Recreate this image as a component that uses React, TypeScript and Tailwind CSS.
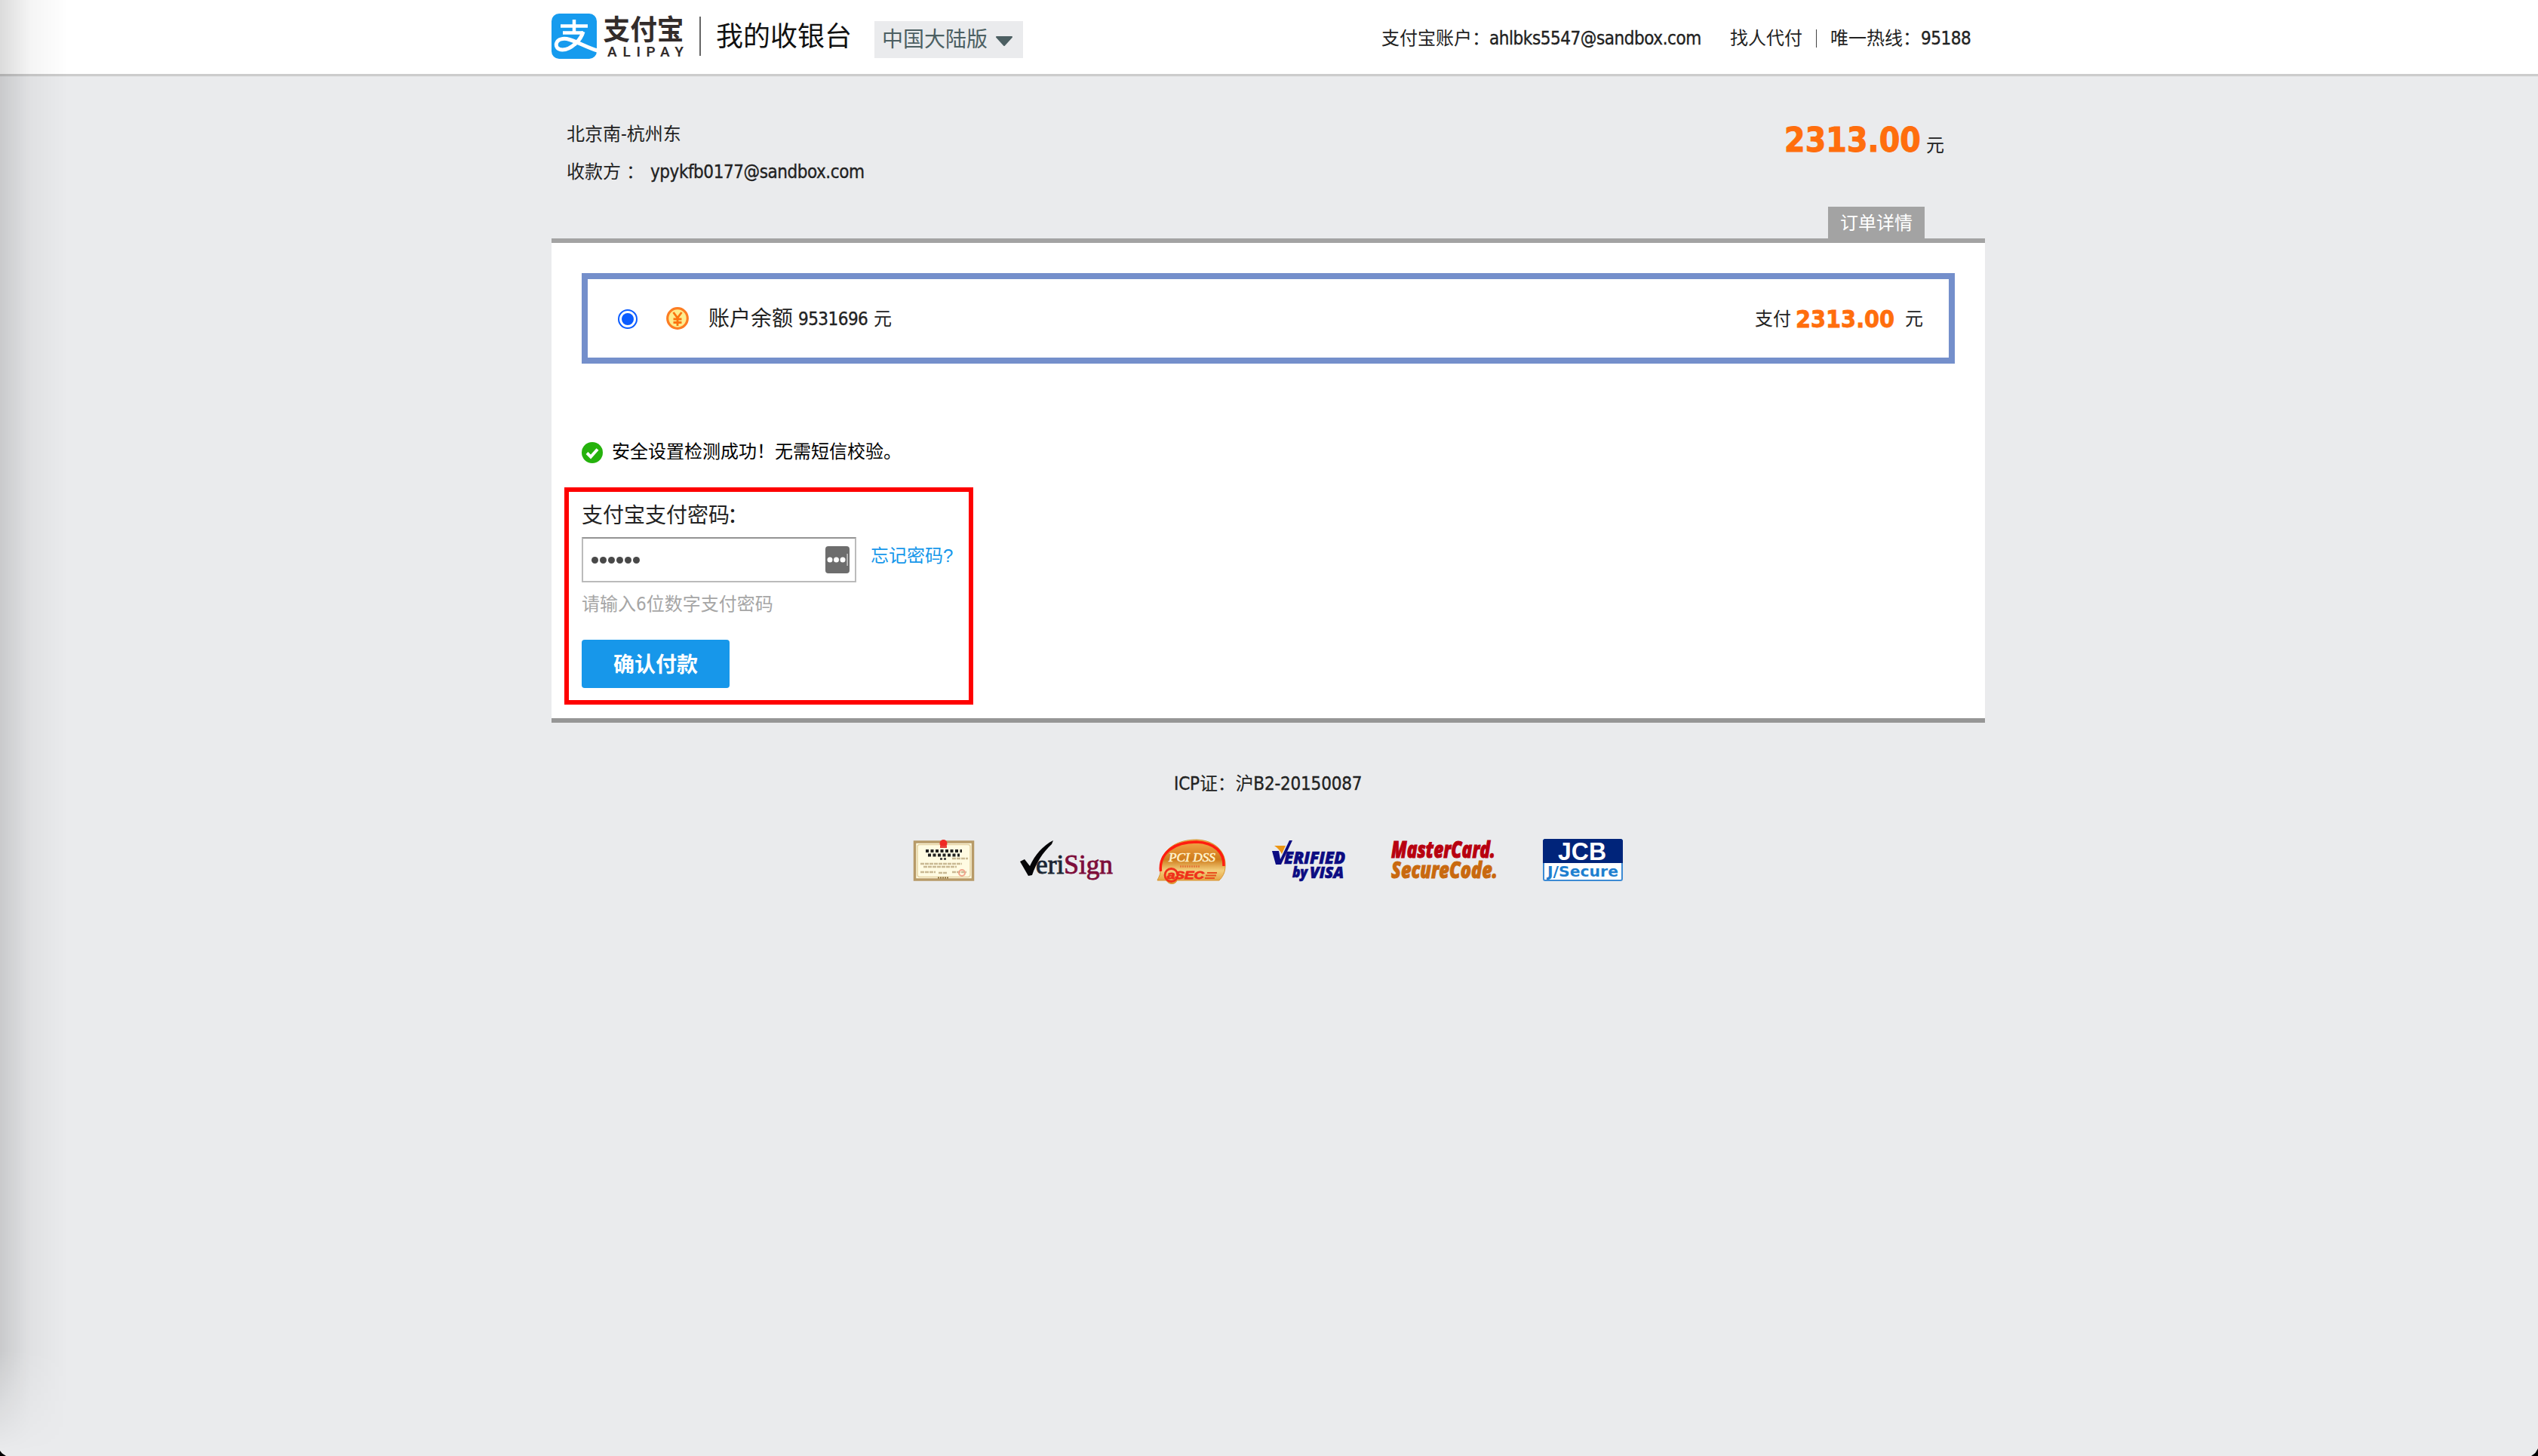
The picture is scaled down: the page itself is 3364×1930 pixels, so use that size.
import React from 'react';

const Logo = () => (
  <svg className="block shrink-0" width="212" height="98" viewBox="731 0 212 98">
    <rect x="731" y="18" width="60" height="60" rx="10" fill="#169bee" />
    <g fill="none" stroke="#fff" strokeLinecap="butt">
      <path d="M743 34.500H779 M761 26V43.500 M746 43.500H773" strokeWidth="4.500" />
      <path d="M773 42C770 53 757 66 745.500 66C739 66 736.500 62 737.500 57.500C739 51.500 747 50 755 52.500C767 56 778 63 792 67" strokeWidth="5" />
    </g>
    <text x="799.500" y="52.500" fontSize="37" fontWeight="700" fontFamily="Noto Sans CJK SC, sans-serif" fill="#332c2b" textLength="107" lengthAdjust="spacingAndGlyphs">支付宝</text>
    <text x="805" y="75" fontSize="19" fontWeight="600" fontFamily="Roboto, sans-serif" fill="#332c2b" textLength="101" lengthAdjust="spacing">ALIPAY</text>
    <rect x="927" y="22" width="2" height="52" fill="#666" />
  </svg>
);

const Header = () => (
  <header className="h-[98px] bg-white shadow-[0_3px_1px_#cccccc]">
    <div className="ml-[731px] flex h-full w-[1900px] items-center">
      <Logo />
      <h1 className="ml-[6px] w-[182px] text-[36px] leading-[40px] whitespace-nowrap text-[#111]">我的收银台</h1>
      <button className="mt-[7px] ml-[28px] flex h-[49px] w-[197px] items-center bg-[#eaebed] pl-[10px] text-[28px] leading-[40px] text-[#4c5f62]">
        <span className="whitespace-nowrap">中国大陆版</span>
        <svg className="mt-[4px] ml-[10px]" width="24" height="14" viewBox="0 0 24 14"><path d="M2 1H22L12 12Z" fill="#4c5f62" stroke="#4c5f62" strokeWidth="2" strokeLinejoin="round" /></svg>
      </button>
      <div className="mt-[4px] ml-[475px] flex h-[30px] items-center whitespace-nowrap">
        <span className="w-[143px]">支付宝账户：</span>
        <span className="w-[319px] tracking-[-0.45px] [-webkit-text-stroke:0.35px]">ahlbks5547@sandbox.com</span>
        <span className="w-[114px]">找人代付</span>
        <span className="h-[24px] w-px bg-[#444]" />
        <span className="ml-[18px] w-[120px]">唯一热线：</span>
        <span className="tracking-[-0.5px] [-webkit-text-stroke:0.35px]">95188</span>
      </div>
    </div>
  </header>
);

const OrderSummary = () => (
  <section className="flex h-[218px] justify-between pl-[20px] whitespace-nowrap">
    <div className="pt-[62px]">
      <p className="h-[50px] leading-[36px]">北京南-杭州东</p>
      <p className="flex leading-[36px]">
        <span className="w-[79px]">收款方</span>
        <span className="w-[32px]">：</span>
        <span className="tracking-[-0.45px] [-webkit-text-stroke:0.35px]">ypykfb0177@sandbox.com</span>
      </p>
    </div>
    <div className="flex flex-col items-end">
      <div className="mt-[58px] mr-[54px] flex h-[60px] items-baseline">
        <strong className="text-[44px] leading-[60px] tracking-[0.1px] text-[#ff6e0d] [-webkit-text-stroke:1px]">2313.00</strong>
        <span className="ml-[7px]">元</span>
      </div>
      <div className="mt-auto mr-[80px] flex h-[42px] w-[128px] items-center justify-center bg-[#a3a3a3] pt-[2px] leading-[40px] text-white">订单详情</div>
    </div>
  </section>
);

const Coin = () => (
  <svg width="30" height="30" viewBox="0 0 30 30" className="ml-[38px] shrink-0">
    <circle cx="15" cy="15" r="13.300" fill="#fdec8e" stroke="#fd7d22" strokeWidth="3.200" />
    <path d="M9.500 7L15 14.500L20.500 7M15 14.500V25M9.500 16H20.500M9.500 20.500H20.500" fill="none" stroke="#fb7410" strokeWidth="2.800" />
  </svg>
);

const BalanceRow = () => (
  <div className="flex h-[120px] items-center border-8 border-[#748fcb] whitespace-nowrap">
    <svg width="26" height="26" viewBox="0 0 26 26" className="mt-[2px] ml-[40px] shrink-0">
      <circle cx="13" cy="13" r="12" fill="#fff" stroke="#0b5cff" strokeWidth="2" />
      <circle cx="13" cy="13" r="8" fill="#0b5cff" />
    </svg>
    <Coin />
    <span className="mt-[2px] ml-[26px] w-[119px] text-[28px]">账户余额</span>
    <span className="mt-[2px] w-[100px] tracking-[-0.55px] [-webkit-text-stroke:0.35px]">9531696</span>
    <span className="mt-px">元</span>
    <span className="mt-px ml-auto w-[54px]">支付</span>
    <strong className="mt-px w-[145px] text-[32px] tracking-[0px] text-[#ff6e0d] [-webkit-text-stroke:0.8px]">2313.00</strong>
    <span className="mt-px mr-[34px]">元</span>
  </div>
);

const PasswordForm = () => (
  <div className="-ml-[23px] mt-[26px] h-[288px] w-[542px] border-6 border-[#fe0000] pt-[12px] pl-[17px] whitespace-nowrap">
    <label className="block h-[48px] text-[28px] leading-[40px] text-[#222]">支付宝支付密码<span className="-ml-[3px]">：</span></label>
    <div className="flex">
      <div className="flex h-[60px] w-[364px] items-center justify-between border-2 border-[#bbbbbb] border-t-[#949494] bg-white pr-[7px] pl-[11px]">
        <div className="flex gap-[2px]">
          {[0, 1, 2, 3, 4, 5].map((i) => (
            <span key={i} className="h-[9px] w-[9px] rounded-full bg-[#484848]" />
          ))}
        </div>
        <svg width="32" height="36" viewBox="0 0 32 36">
          <rect width="32" height="36" rx="4" fill="#6d6d6d" />
          <circle cx="6" cy="18" r="3.500" fill="#fff" />
          <circle cx="14.500" cy="18" r="3.500" fill="#fff" />
          <circle cx="23" cy="18" r="3.500" fill="#fff" />
          <rect x="28.500" y="10" width="1.200" height="16" fill="#ddd" />
        </svg>
      </div>
      <a className="ml-[19px] mt-[7px] leading-[36px] text-[#1697ea]">忘记密码<span className="font-['Liberation_Sans']">?</span></a>
    </div>
    <p className="mt-[11px] leading-[36px] text-[#a6a6a6]">请输入6位数字支付密码</p>
    <button className="mt-[29px] flex h-[64px] w-[196px] items-center justify-center rounded-[4px] bg-[#1797ea] pt-[3px] text-[28px] font-bold text-white">确认付款</button>
  </div>
);

const Badges = () => (
  <svg className="ml-[1210px] block overflow-visible" width="942" height="64" viewBox="1210 1110 942 64">
    <defs>
      <linearGradient id="gold" x1="0" y1="0" x2="0" y2="1">
        <stop offset="0" stopColor="#f5a84c" /><stop offset="0.450" stopColor="#cf7c1c" /><stop offset="0.700" stopColor="#f3cf7c" /><stop offset="1" stopColor="#e0952f" />
      </linearGradient>
      <linearGradient id="veri" x1="0" y1="0" x2="1" y2="0">
        <stop offset="0" stopColor="#1d2433" /><stop offset="0.370" stopColor="#1d2433" /><stop offset="0.390" stopColor="#7d0d3a" /><stop offset="1" stopColor="#7d0d3a" />
      </linearGradient>
    </defs>
    <g>
      <rect x="1212.500" y="1116" width="77" height="50" fill="#fffbe2" stroke="#b79a68" strokeWidth="3.500" />
      <rect x="1216" y="1119.500" width="70" height="43" rx="3" fill="none" stroke="#e5d3a4" strokeWidth="1.500" />
      <circle cx="1250.500" cy="1118" r="5" fill="#f02a24" /><rect x="1246" y="1121" width="9" height="3" fill="#e5423a" />
      <path d="M1227 1128H1275M1230 1133.500H1272" stroke="#222" strokeWidth="4" strokeDasharray="4 2.500" />
      <path d="M1246 1138.500H1256" stroke="#333" strokeWidth="2.500" strokeDasharray="3 2" />
      <path d="M1262 1138H1283M1220 1145H1275M1224 1149H1268M1220 1156H1240M1244 1157H1256M1262 1156H1281" stroke="#c9b993" strokeWidth="2.500" strokeDasharray="5 1" />
      <circle cx="1275" cy="1157" r="4" fill="none" stroke="#f0a58c" strokeWidth="2" />
      <path d="M1243 1163.500H1258" stroke="#8f7440" strokeWidth="2" strokeDasharray="2 1" />
    </g>
    <g>
      <path d="M1352 1142L1358 1139L1365 1148C1372 1133 1382 1121 1396 1114L1394 1119C1382 1130 1374 1143 1368 1160L1363 1161Z" fill="#050508" />
      <text x="1373" y="1157.500" fontFamily="Liberation Serif, serif" fontSize="35" fill="url(#veri)" stroke="url(#veri)" strokeWidth="0.900" textLength="102" lengthAdjust="spacingAndGlyphs">eriSign</text>
    </g>
    <g>
      <path d="M1534 1167C1536 1162 1538 1160 1538 1155C1536 1129 1556 1113 1586 1113C1612 1114 1625 1130 1624 1148C1624 1157 1620 1163 1616 1167H1560C1558 1173 1549 1173 1546 1167Z" fill="url(#gold)" stroke="#d9942e" strokeWidth="1" />
      <path d="M1538.500 1155C1536 1131 1556 1116 1586 1116C1610 1117 1623 1130 1622 1148" fill="none" stroke="#ff1d10" strokeWidth="3.500" />
      <text x="1549" y="1142" fontFamily="Liberation Serif, serif" fontStyle="italic" fontSize="17" fill="#fff4d0" stroke="#fff4d0" strokeWidth="0.500" textLength="62" lengthAdjust="spacingAndGlyphs">PCI DSS</text>
      <path d="M1564 1148.500H1590" stroke="#e57a3a" strokeWidth="2.500" strokeDasharray="2 1" />
      <circle cx="1552.500" cy="1160" r="8.500" fill="none" stroke="#f0301a" strokeWidth="2.800" />
      <text x="1547" y="1165" fontFamily="Liberation Sans, sans-serif" fontWeight="700" fontStyle="italic" fontSize="14" fill="#f0301a" stroke="#f0301a" strokeWidth="0.800" textLength="49" lengthAdjust="spacingAndGlyphs">aSEC</text>
      <path d="M1600 1157H1613M1598 1160.500H1612M1597 1164H1610" stroke="#e8501e" strokeWidth="2.200" />
    </g>
    <g fill="#0c0c82" stroke="#0c0c82" strokeWidth="0.700" fontFamily="Open Sans, sans-serif" fontWeight="800" fontStyle="italic">
      <path d="M1689 1121H1704L1699 1132C1697 1128 1694 1124 1689 1121Z" fill="#ec9614" stroke="none" />
      <path d="M1686 1128H1695L1697 1139L1709 1114H1713L1698 1146H1691Z" stroke="none" />
      <text x="1702" y="1145" fontSize="22" textLength="81" lengthAdjust="spacingAndGlyphs">ERIFIED</text>
      <text x="1713" y="1163" fontSize="19" textLength="20" lengthAdjust="spacingAndGlyphs">by</text>
      <text x="1736" y="1164" fontSize="21" textLength="45" lengthAdjust="spacingAndGlyphs">VISA</text>
    </g>
    <g fontFamily="Open Sans, sans-serif" fontWeight="800" fontStyle="italic" fontSize="30" strokeWidth="1">
      <text x="1844" y="1136.500" fill="#b8000f" stroke="#b8000f" textLength="138" lengthAdjust="spacingAndGlyphs">MasterCard.</text>
      <text x="1844" y="1164" fill="#c9690f" stroke="#c9690f" textLength="141" lengthAdjust="spacingAndGlyphs">SecureCode.</text>
    </g>
    <g>
      <rect x="2046" y="1113" width="104" height="54" rx="2" fill="#fff" stroke="#3c8ad4" strokeWidth="2" />
      <path d="M2045 1144V1114L2047 1112H2149L2151 1114V1144Z" fill="#00247a" />
      <text x="2065" y="1139.500" fontFamily="Liberation Sans, sans-serif" fontWeight="700" fontSize="33" fill="#fff" textLength="64" lengthAdjust="spacingAndGlyphs">JCB</text>
      <text x="2051" y="1162" fontFamily="DejaVu Sans, sans-serif" fontWeight="700" fontSize="20" fill="#1e7fd0" textLength="94" lengthAdjust="spacingAndGlyphs">J/Secure</text>
    </g>
  </svg>
);

export default function App() {
  return (
    <div className="relative h-[1930px] w-full overflow-hidden bg-[#eaebed] font-['DejaVu_Sans_Condensed','Noto_Sans_CJK_SC',sans-serif] text-[24px] leading-[36px] text-[#222]">
      <Header />
      <main className="ml-[731px] w-[1900px]">
        <OrderSummary />
        <section className="h-[642px] border-y-6 border-t-[#a3a3a3] border-b-[#969696] bg-white px-[40px] pt-[40px]">
          <BalanceRow />
          <div className="mt-[100px] flex h-[38px] items-center whitespace-nowrap text-black">
            <svg width="28" height="28" viewBox="0 0 28 28" className="mt-[-2px] mr-[12px]">
              <circle cx="14" cy="14" r="14" fill="#25b20c" />
              <path d="M7 14.500L12 19.500L21 9.500" fill="none" stroke="#fff" strokeWidth="4" />
            </svg>
            <span className="-mt-[4px]">安全设置检测成功！无需短信校验。</span>
          </div>
          <PasswordForm />
        </section>
      </main>
      <footer className="pt-[63px]">
        <p className="mb-[53px] ml-[1556px] tracking-[-0.2px]"><span className="[-webkit-text-stroke:0.35px]">ICP</span>证：沪<span className="[-webkit-text-stroke:0.35px]">B2-20150087</span></p>
        <Badges />
      </footer>
      <div className="absolute inset-y-0 left-0 w-[90px] bg-linear-to-r from-black/14 via-black/4 via-45% to-transparent [mask-image:linear-gradient(to_bottom,black_1790px,transparent_1925px)]" />
      <div className="absolute bottom-0 left-0 h-[7px] w-[8px] bg-black [clip-path:polygon(0_0,35%_50%,100%_100%,0_100%)]" />
      <div className="absolute right-0 bottom-0 h-[10px] w-[9px] bg-black [clip-path:polygon(100%_0,60%_60%,0_100%,100%_100%)]" />
    </div>
  );
}
